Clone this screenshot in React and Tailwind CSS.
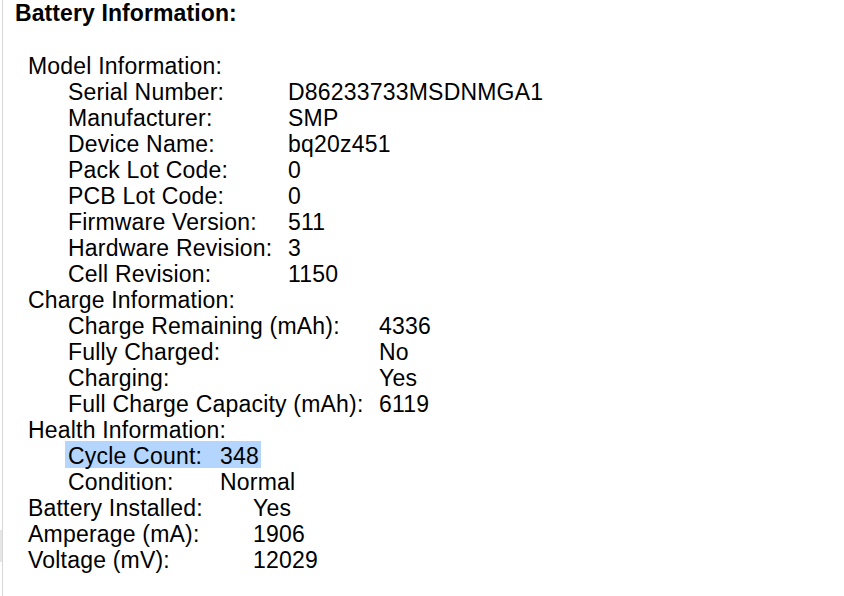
import React from 'react';

const model = [
  ['Serial Number:', 'D86233733MSDNMGA1'],
  ['Manufacturer:', 'SMP'],
  ['Device Name:', 'bq20z451'],
  ['Pack Lot Code:', '0'],
  ['PCB Lot Code:', '0'],
  ['Firmware Version:', '511'],
  ['Hardware Revision:', '3'],
  ['Cell Revision:', '1150'],
];

const charge = [
  ['Charge Remaining (mAh):', '4336'],
  ['Fully Charged:', 'No'],
  ['Charging:', 'Yes'],
  ['Full Charge Capacity (mAh):', '6119'],
];

const battery = [
  ['Battery Installed:', 'Yes'],
  ['Amperage (mA):', '1906'],
  ['Voltage (mV):', '12029'],
];

function Rows({ rows, labelWidth }) {
  return rows.map(([label, value]) => (
    <div key={label} className="flex h-[26px]">
      <span className={`shrink-0 ${labelWidth}`}>{label}</span>
      <span>{value}</span>
    </div>
  ));
}

export default function App() {
  return (
    <div className="flex w-[844px] h-[596px] bg-white text-black overflow-hidden" style={{ fontFamily: '"Liberation Sans", Arial, sans-serif' }}>
      <div className="w-[2px] shrink-0 flex flex-col">
        <div className="mt-[530px] h-[32px] bg-[#e6e6e6]" />
      </div>
      <div className="w-[1px] shrink-0 bg-[#d6d6d6]" />

      <div className="flex-1 pl-[12px]">
        <h1 className="text-[23px] leading-[26px] font-bold tracking-[0.1px]">Battery Information:</h1>

        <div className="mt-[27px] pl-[13px] text-[23px] leading-[26px] tracking-[0.2px]">
          <div className="h-[26px]">Model Information:</div>
          <div className="pl-[40px]">
            <Rows rows={model} labelWidth="w-[220px]" />
          </div>

          <div className="h-[26px]">Charge Information:</div>
          <div className="pl-[40px]">
            <Rows rows={charge} labelWidth="w-[311px]" />
          </div>

          <div className="h-[26px]">Health Information:</div>
          <div className="pl-[37px]">
            <div className="flex">
              <div className="flex h-[27px] -mt-[2px] mb-[1px] pt-[2px] pl-[3px] pr-[2px] bg-[#b4d5fd]">
                <span className="w-[152px]">Cycle Count:</span>
                <span>348</span>
              </div>
            </div>
            <div className="flex h-[26px] pl-[3px]">
              <span className="w-[152px]">Condition:</span>
              <span>Normal</span>
            </div>
          </div>

          <Rows rows={battery} labelWidth="w-[225px]" />
        </div>
      </div>
    </div>
  );
}
